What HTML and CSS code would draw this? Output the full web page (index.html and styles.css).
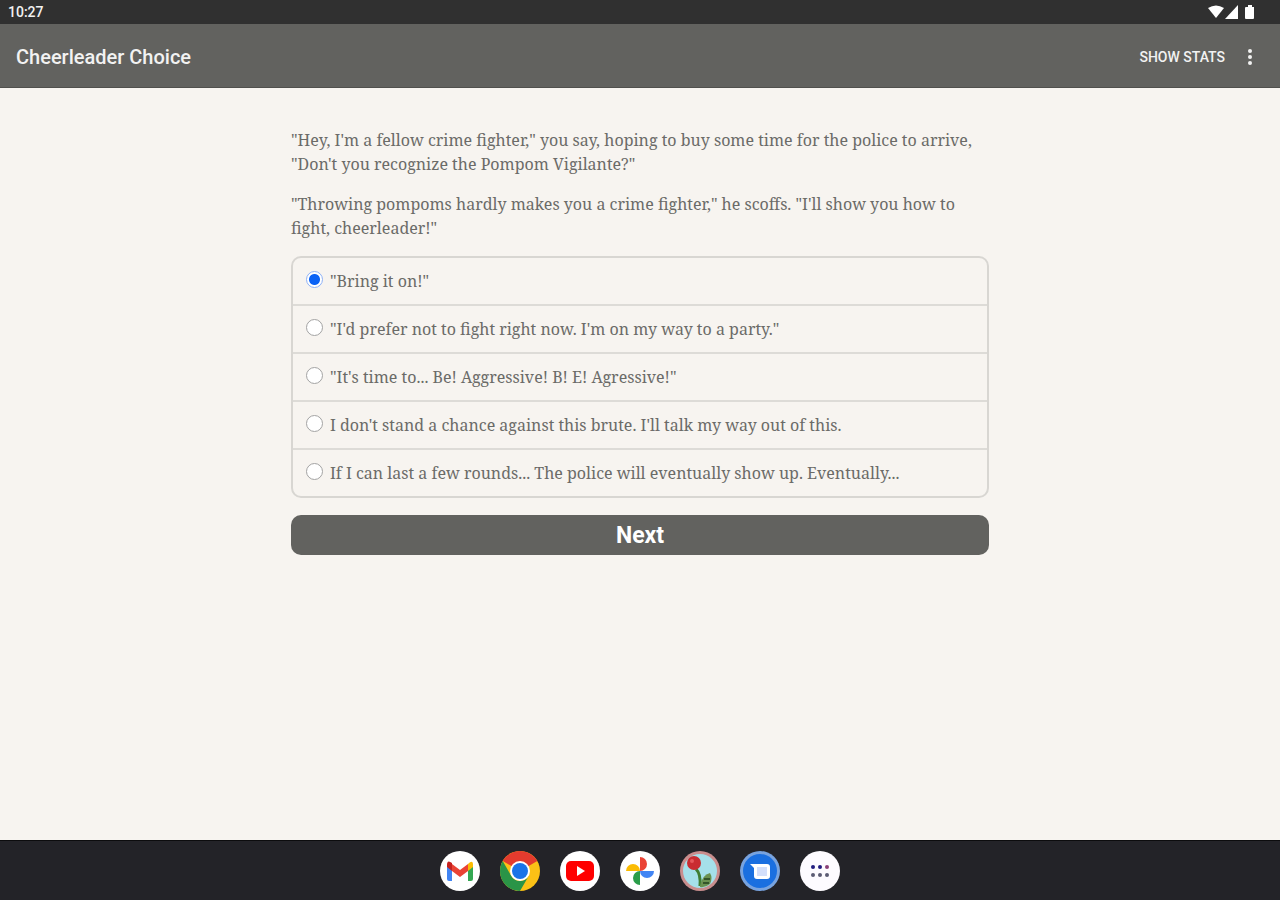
FILE: index.html
```html
<!DOCTYPE html>
<html lang="en">
<head>
  <title>Cheerleader Choice</title>
  <meta charset="UTF-8">
  <meta name="viewport" content="width=device-width, initial-scale=1.0">
  <link rel="stylesheet" href="styles.css">
</head>
<body>

  <!-- System status bar -->
  <div class="status-bar">
    <span>10:27</span>
    <svg class="status-icons" width="48" height="16" viewBox="0 0 48 16" fill="#fff">
      <path d="M0 4 Q8 -1 16 4 L8 14 Z"/>
      <path d="M30 1 V15 H17 Z"/>
      <path d="M38 3 H40 V1 H44 V3 H46 V14 Q46 15 45 15 H38 Q37 15 37 14 V4 Q37 3 38 3 Z"/>
    </svg>
  </div>

  <!-- App bar -->
  <header class="app-bar">
    <h1>Cheerleader Choice</h1>
    <div class="actions">
      <button type="button" class="stats">Show Stats</button>
      <button type="button" class="more" aria-label="More options">
        <svg width="6" height="18" viewBox="0 0 6 18" fill="#f2f2f2">
          <circle cx="3" cy="3" r="2"/>
          <circle cx="3" cy="9" r="2"/>
          <circle cx="3" cy="15" r="2"/>
        </svg>
      </button>
    </div>
  </header>

  <main>
    <div class="container">
      <p>"Hey, I'm a fellow crime fighter," you say, hoping to buy some time for the police to arrive, "Don't you recognize the Pompom Vigilante?"</p>
      <p>"Throwing pompoms hardly makes you a crime fighter," he scoffs. "I'll show you how to fight, cheerleader!"</p>

      <form id="choiceForm">
        <div class="choices">
          <label for="choice1"><input type="radio" id="choice1" name="choice" value="1" checked>"Bring it on!"</label>
          <label for="choice2"><input type="radio" id="choice2" name="choice" value="2">"I'd prefer not to fight right now. I'm on my way to a party."</label>
          <label for="choice3"><input type="radio" id="choice3" name="choice" value="3">"It's time to... Be! Aggressive! B! E! Agressive!"</label>
          <label for="choice4"><input type="radio" id="choice4" name="choice" value="4">I don't stand a chance against this brute. I'll talk my way out of this.</label>
          <label for="choice5"><input type="radio" id="choice5" name="choice" value="5">If I can last a few rounds... The police will eventually show up. Eventually...</label>
        </div>
        <button type="button" class="next">Next</button>
      </form>
    </div>
  </main>

  <!-- Dock -->
  <nav class="dock">
    <button type="button" aria-label="Gmail">
      <svg viewBox="0 0 40 40">
        <circle cx="20" cy="20" r="20" fill="#fff"/>
        <path d="M7 15 L12 17 V30 H9 Q7 30 7 28 Z" fill="#4285f4"/>
        <path d="M28 17 L33 14 V28 Q33 30 31 30 H28 Z" fill="#34a853"/>
        <path d="M28 13 Q33 8 33 14 V16 L28 20 Z" fill="#fbbc04"/>
        <path d="M12 13 L20 19 L28 13 V20 L20 26 L12 20 Z" fill="#ea4335"/>
        <path d="M7 14 Q7 8 12 12 V20 L7 16 Z" fill="#c5221f"/>
      </svg>
    </button>
    <button type="button" aria-label="Chrome">
      <svg viewBox="0 0 40 40">
        <circle cx="20" cy="20" r="20" fill="#fbc116"/>
        <path d="M20 20 L2.7 10 A20 20 0 0 1 37.3 10 Z" fill="#e33b2e"/>
        <path d="M2.7 10 L11.3 25 A10 10 0 0 0 28.7 25 L20 40 A20 20 0 0 1 2.7 10 Z" fill="#2a9447"/>
        <circle cx="20" cy="20" r="10" fill="#fff"/>
        <circle cx="20" cy="20" r="8" fill="#1a73e8"/>
      </svg>
    </button>
    <button type="button" aria-label="YouTube">
      <svg viewBox="0 0 40 40">
        <circle cx="20" cy="20" r="20" fill="#fff"/>
        <rect x="6" y="10" width="28" height="20" rx="5" fill="#f00"/>
        <path d="M17 15 L25 20 L17 25 Z" fill="#fff"/>
      </svg>
    </button>
    <button type="button" aria-label="Photos">
      <svg viewBox="0 0 40 40">
        <circle cx="20" cy="20" r="20" fill="#fff"/>
        <path d="M20 6 A7 7 0 0 1 20 20 Z" fill="#ea4335"/>
        <path d="M34 20 A7 7 0 0 1 20 20 Z" fill="#4285f4"/>
        <path d="M20 34 A7 7 0 0 1 20 20 Z" fill="#2a9d4a"/>
        <path d="M6 20 A7 7 0 0 1 20 20 Z" fill="#fbbc04"/>
      </svg>
    </button>
    <button type="button" aria-label="Game">
      <svg viewBox="0 0 40 40">
        <circle cx="20" cy="20" r="20" fill="#c98e8e"/>
        <circle cx="20" cy="20" r="17" fill="#a5e0ea"/>
        <path d="M16 18 Q21 23 20 35" fill="none" stroke="#3f7d32" stroke-width="3"/>
        <path d="M20 35 Q22 24 30 22 Q33 27 30 33 Q25 37 20 36 Z" fill="#6b9150"/>
        <path d="M24 28 H30 M23 32 H29" stroke="#35542a" stroke-width="2"/>
        <circle cx="14" cy="12" r="7" fill="#c92c31"/>
        <circle cx="12" cy="10" r="2" fill="#e5575a"/>
      </svg>
    </button>
    <button type="button" aria-label="Messages">
      <svg viewBox="0 0 40 40">
        <circle cx="20" cy="20" r="20" fill="#78a3df"/>
        <circle cx="20" cy="20" r="17" fill="#1a6fe0"/>
        <path d="M10 13 H27 Q30 13 30 16 V25 Q30 28 27 28 H17 Q14 28 14 25 V17 Z" fill="#fff"/>
        <rect x="17" y="16" width="10" height="9" fill="#d3dffb"/>
      </svg>
    </button>
    <button type="button" aria-label="All apps">
      <svg viewBox="0 0 40 40">
        <circle cx="20" cy="20" r="20" fill="#fdfbff"/>
        <g fill="#221d80">
          <circle cx="13" cy="16" r="2"/>
          <circle cx="20" cy="16" r="2"/>
          <circle cx="27" cy="16" r="2" fill="#8a3f78"/>
        </g>
        <g fill="#5c5c74">
          <circle cx="13" cy="24" r="2"/>
          <circle cx="20" cy="24" r="2"/>
          <circle cx="27" cy="24" r="2"/>
        </g>
      </svg>
    </button>
  </nav>

</body>
</html>
```
FILE: styles.css
```css
body {
  font-family: Roboto, sans-serif;
  background: #f7f4f0;
  margin: 0;
  min-height: 100vh;
  display: flex;
  flex-direction: column;
}

button {
  border: none;
  padding: 0;
  font-family: inherit;
  cursor: pointer;
}

svg {
  display: block;
}

.status-bar {
  height: 24px;
  padding: 0 24px 0 8px;
  background: #303030;
  color: #f2f2f2;
  font-size: 14px;
  font-weight: 500;
  display: flex;
  align-items: center;
  justify-content: space-between;
}

.app-bar {
  height: 64px;
  padding: 2px 20px 0 16px;
  box-sizing: border-box;
  background: #62625f;
  border-bottom: 1px solid #50504d;
  color: #f2f2f2;
  display: flex;
  align-items: center;
  justify-content: space-between;
}

h1 {
  margin: 0;
  font-size: 20px;
  font-weight: 500;
}

.actions {
  display: flex;
  align-items: center;
  gap: 15px;
}

.stats,
.more {
  background: none;
  color: #f2f2f2;
}

.stats {
  font-size: 14px;
  font-weight: 500;
  text-transform: uppercase;
}

.more {
  padding: 0 7px;
}

main {
  flex: 1;
  padding: 40px 16px;
}

.container {
  max-width: 698px;
  margin: 0 auto;
  font-family: "Noto Serif", "DejaVu Serif Condensed", "DejaVu Serif", serif;
  font-size: 16px;
  line-height: 24px;
  color: #6b6b68;
}

p {
  margin: 0 0 16px;
}

.choices {
  border: 2px solid #d8d6d2;
  border-radius: 10px;
}

.choices label {
  display: flex;
  align-items: center;
  padding: 11px 13px;
  border-bottom: 2px solid #dddbd7;
}

.choices label:last-child {
  border-bottom: none;
}

input[type="radio"] {
  appearance: none;
  flex: none;
  width: 17px;
  height: 17px;
  margin: 0 7px 4px 0;
  border: 1px solid #a3a3a3;
  border-radius: 50%;
  background: #fff;
}

input[type="radio"]:checked {
  border-color: #8fb2f7;
  background: radial-gradient(circle, #0a62f5 5px, #fff 6px);
}

.next {
  display: block;
  width: 100%;
  height: 40px;
  margin-top: 17px;
  border-radius: 10px;
  background: #62625f;
  color: #fff;
  font-family: Roboto, sans-serif;
  font-size: 23px;
  font-weight: 700;
}

.dock {
  height: 60px;
  box-sizing: border-box;
  background: #232328;
  border-top: 1px solid #0c0c0e;
  display: flex;
  align-items: center;
  justify-content: center;
  gap: 20px;
}

.dock button {
  width: 40px;
  height: 40px;
  border-radius: 50%;
  background: none;
}
```
